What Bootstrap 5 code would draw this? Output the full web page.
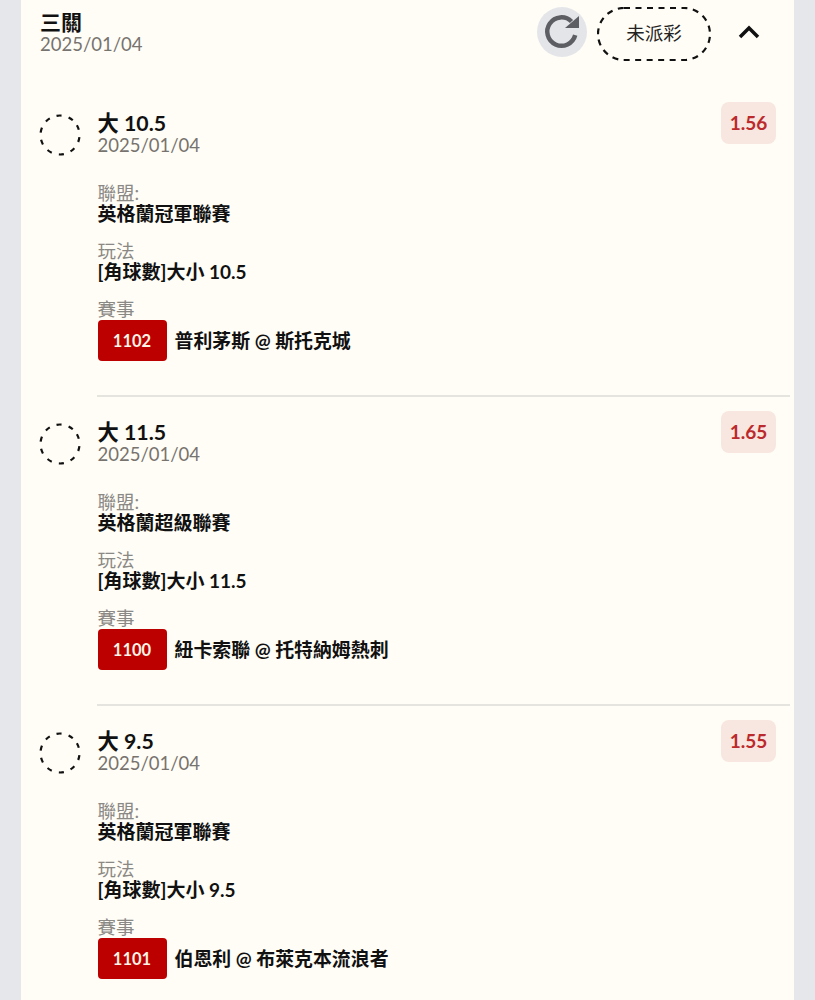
<!DOCTYPE html>
<html lang="zh-Hant">
<head>
  <meta charset="UTF-8">
  <meta name="viewport" content="width=device-width, initial-scale=1">
  <title>三關</title>
  <link href="https://cdn.jsdelivr.net/npm/bootstrap@5.3.3/dist/css/bootstrap.min.css" rel="stylesheet">
  <style>
    html, body { height: 1000px; overflow: hidden; }
    body { background: #e5e7eb; font-family: Lato, "Noto Sans CJK TC", sans-serif; color: #111; }
    .sheet { margin: 0 21px; height: 1000px; background: #fffdf6; overflow: hidden; }
    .parlay-head { height: 62px; padding: 7px 0 0 19px; }
    .head-title { font-size: 21px; line-height: 25px; font-weight: 700; margin-top: 2px; }
    .date-text { font-size: 18.500px; line-height: 21px; color: #77736e; }
    .head-side { width: 257px; flex: none; }
    .refresh-btn { width: 50px; height: 50px; background: #e3e5e9; }
    .status-pill { width: 114px; height: 54px; margin-left: 10px; font-size: 18.500px; color: #222; }
    .pill-dash { top: 0; left: 0; }
    .chevron-box { width: 50px; margin-left: 13px; }
    .bet-item { padding-top: 40px; height: 333px; }
    .bet-rule + .bet-item { padding-top: 14px; height: 307px; }
    .bet-inner { padding: 0 18px; }
    .status-ring { width: 42px; height: 42px; flex: none; margin-top: 12px; }
    .bet-body { margin-left: 16.500px; }
    .bet-head { margin-bottom: 27px; }
    .bet-title { font-size: 21.300px; line-height: 24px; font-weight: 700; margin-top: 9px; }
    .odds-tag { width: 55px; height: 42px; background: #f8e6e0; color: #bb2a2c; font-size: 19px; font-weight: 700; border-radius: 8px; }
    .field-label { font-size: 18.500px; line-height: 21px; color: #8b8985; margin-top: 17px; }
    .bet-head + .field-label { margin-top: 0; }
    .field-value { font-size: 19px; line-height: 20px; font-weight: 700; }
    .match-code { width: 69px; height: 41px; padding-top: 1px; background: #bc0000; color: #fdf3e6; font-size: 16.500px; font-weight: 700; border-radius: 4px; }
    .match-name { font-size: 18.900px; font-weight: 700; margin-left: 8px; padding-top: 1px; }
    .bet-rule { margin: 0 4px 0 76px; height: 2px; background: #e6e4df; }
  </style>
</head>
<body>
  <div class="sheet">
    <div class="parlay-head d-flex justify-content-between">
      <div>
        <div class="head-title">三關</div>
        <div class="date-text">2025/01/04</div>
      </div>
      <div class="head-side d-flex align-items-start">
        <div class="refresh-btn rounded-circle d-flex align-items-center justify-content-center">
          <svg width="38" height="38" viewBox="0 0 38 38" fill="none">
            <path d="M32.200 22.200A14.200 14.200 0 1 1 28.500 8.500" stroke="#5c5e63" stroke-width="4.500"/>
            <path d="M22 15h14V3z" fill="#5c5e63"/>
          </svg>
        </div>
        <div class="status-pill position-relative d-flex align-items-center justify-content-center">
          <svg class="pill-dash position-absolute" width="114" height="54" viewBox="0 0 114 54" fill="none">
            <rect x="1" y="1" width="112" height="52" rx="26" stroke="#111" stroke-width="2.200" stroke-dasharray="6 5.500"/>
          </svg>
          未派彩
        </div>
        <div class="chevron-box d-flex justify-content-center">
          <svg width="24" height="54" viewBox="0 0 24 54" fill="none">
            <path d="M3 30l9-9 9 9" stroke="#111" stroke-width="3.500"/>
          </svg>
        </div>
      </div>
    </div>

    <div id="bets"></div>
  </div>

  <script>
    const bets = [
      { title: "大 10.5", odds: "1.56", league: "英格蘭冠軍聯賽", play: "[角球數]大小 10.5", code: "1102", match: "普利茅斯 @ 斯托克城" },
      { title: "大 11.5", odds: "1.65", league: "英格蘭超級聯賽", play: "[角球數]大小 11.5", code: "1100", match: "紐卡索聯 @ 托特納姆熱刺" },
      { title: "大 9.5", odds: "1.55", league: "英格蘭冠軍聯賽", play: "[角球數]大小 9.5", code: "1101", match: "伯恩利 @ 布萊克本流浪者" }
    ];
    document.getElementById("bets").innerHTML = bets.map((b, i) => `
      <div class="bet-item">
        <div class="bet-inner d-flex">
          <svg class="status-ring" viewBox="0 0 42 42" fill="none">
            <circle cx="21" cy="21" r="19.500" stroke="#111" stroke-width="2.200" stroke-dasharray="5 7.250" transform="rotate(-30 21 21)"/>
          </svg>
          <div class="bet-body flex-grow-1">
            <div class="bet-head d-flex justify-content-between align-items-start">
              <div>
                <div class="bet-title">${b.title}</div>
                <div class="date-text">2025/01/04</div>
              </div>
              <div class="odds-tag d-flex align-items-center justify-content-center">${b.odds}</div>
            </div>
            <div class="field-label">聯盟:</div>
            <div class="field-value">${b.league}</div>
            <div class="field-label">玩法</div>
            <div class="field-value">${b.play}</div>
            <div class="field-label">賽事</div>
            <div class="d-flex align-items-center">
              <div class="match-code d-flex align-items-center justify-content-center">${b.code}</div>
              <div class="match-name">${b.match}</div>
            </div>
          </div>
        </div>
      </div>
      ${i < bets.length - 1 ? '<div class="bet-rule"></div>' : ''}
    `).join("");
  </script>
  <script src="https://cdn.jsdelivr.net/npm/bootstrap@5.3.3/dist/js/bootstrap.bundle.min.js"></script>
</body>
</html>
